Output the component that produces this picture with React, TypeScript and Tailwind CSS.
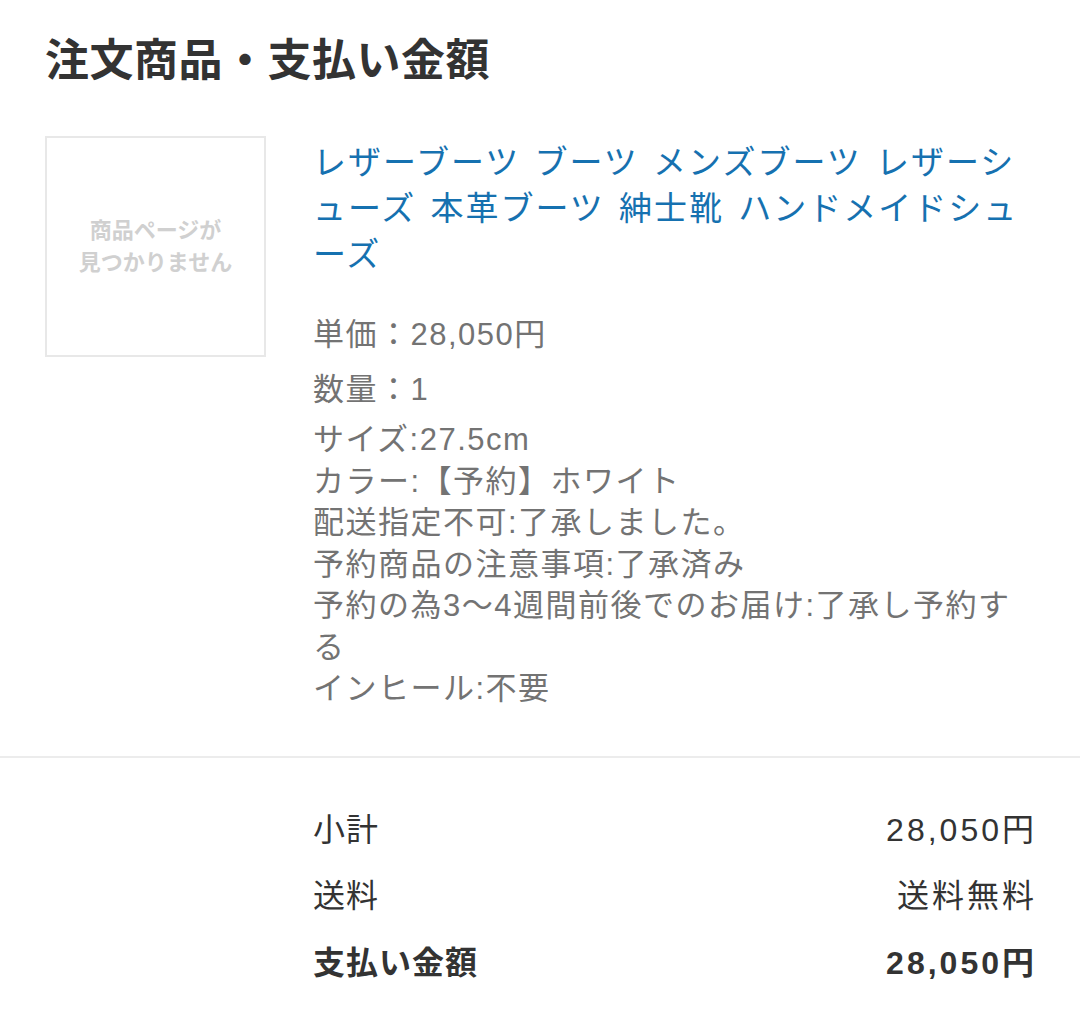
import React from 'react';

const font = { fontFamily: '"Liberation Sans", "Noto Sans CJK JP", "Noto Sans", sans-serif' };

const options = [
  'サイズ:27.5cm',
  'カラー:【予約】ホワイト',
  '配送指定不可:了承しました。',
  '予約商品の注意事項:了承済み',
  '予約の為3〜4週間前後でのお届け:了承し予約する',
  'インヒール:不要',
];

export default function App() {
  return (
    <div className="min-h-screen w-[1080px] bg-white" style={font}>
      {/* Heading */}
      <div className="px-[45px] pt-[33px]">
        <h1 className="text-[44px] leading-[56px] font-bold tracking-[0.5px] text-[#333]">注文商品・支払い金額</h1>
      </div>

      {/* Item */}
      <div className="flex gap-[47px] px-[45px] pt-[47px] pb-[46px]">
        <div className="w-[221px] h-[221px] shrink-0 border-2 border-[#e8e8e8] flex items-center justify-center">
          <p className="text-center text-[22px] leading-[32px] font-bold text-[#d0d0d0]">
            商品ページが
            <br />
            見つかりません
          </p>
        </div>
        <div className="flex-1 pt-[4px]">
          <a className="block text-[33px] leading-[46px] tracking-[2px] [word-spacing:3px] text-[#1671b0]">
            レザーブーツ ブーツ メンズブーツ レザーシ
            <br />
            ューズ 本革ブーツ 紳士靴 ハンドメイドシュ
            <br />
            ーズ
          </a>
          <div className="mt-[36px] text-[31px] tracking-[1.5px] text-[#737373]">
            <p className="leading-[42px]">単価：28,050円</p>
            <p className="leading-[42px] mt-[13px]">数量：1</p>
            <div className="mt-[8px] leading-[41.5px] [line-break:loose]">
              {options.map((o) => (
                <p key={o}>{o}</p>
              ))}
            </div>
          </div>
        </div>
      </div>

      <div className="h-[2px] bg-[#ececec]" />

      {/* Summary */}
      <div className="pl-[313px] pr-[46px] pt-[39px] text-[32px] tracking-[1px] text-[#333]">
        <div className="flex justify-between leading-[66.5px]">
          <span>小計</span>
          <span className="tracking-[3px] -mr-[3px]">28,050円</span>
        </div>
        <div className="flex justify-between leading-[66.5px]">
          <span>送料</span>
          <span className="tracking-[3px] -mr-[3px]">送料無料</span>
        </div>
        <div className="flex justify-between leading-[66.5px] font-bold">
          <span>支払い金額</span>
          <span className="tracking-[3px] -mr-[3px]">28,050円</span>
        </div>
      </div>
    </div>
  );
}
